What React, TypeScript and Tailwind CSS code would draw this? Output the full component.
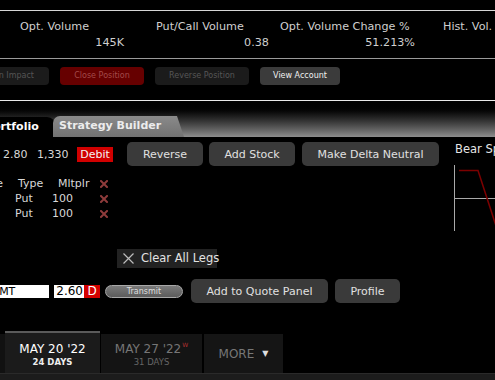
import React from 'react';

const stats = [
  { label: 'Opt. Volume', value: '145K', cls: 'ml-[20px] w-[104px]' },
  { label: 'Put/Call Volume', value: '0.38', cls: 'ml-[32px] w-[113px]' },
  { label: 'Opt. Volume Change %', value: '51.213%', cls: 'ml-[11px] w-[135px]' },
  { label: 'Hist. Vol.', value: '', cls: 'ml-[28px] w-[80px]' },
];

function RedX() {
  return (
    <svg width="8" height="8" viewBox="0 0 8 8" className="block">
      <path d="M1 1L7 7M7 1L1 7" stroke="#8e3b3b" strokeWidth="2" strokeLinecap="square" />
    </svg>
  );
}

export default function App() {
  return (
    <div className="w-[495px] h-[380px] bg-black overflow-hidden font-['DejaVu_Sans',sans-serif] text-[#d8d8d8] flex flex-col">
      {/* Top spacer + rule */}
      <div className="h-[10px] shrink-0" />
      <div className="h-px bg-[#d6d6d6] shrink-0" />

      {/* Stats strip */}
      <div className="h-[47px] shrink-0 flex pt-[8px] text-[11.2px] leading-[15px] text-[#cfcfcf]">
        {stats.map((s) => (
          <div key={s.label} className={`${s.cls} shrink-0 flex flex-col whitespace-nowrap`}>
            <span>{s.label}</span>
            <span className="text-right mt-px">{s.value}</span>
          </div>
        ))}
      </div>
      <div className="h-px bg-[#9a9a9a] shrink-0" />

      {/* Position actions */}
      <div className="h-[41px] shrink-0 flex items-start pt-[8px] text-[8px] whitespace-nowrap overflow-hidden">
        <div className="w-[70px] -ml-[21px] h-[18px] shrink-0 rounded-[4px] bg-[#1b1b1b] text-[#555] flex items-center justify-end pr-[15px]">
          Margin Impact
        </div>
        <div className="ml-[11px] w-[84px] h-[18px] shrink-0 rounded-[4px] bg-[#660000] text-[#a24a4a] flex items-center justify-center">
          Close Position
        </div>
        <div className="ml-[11px] w-[94px] h-[18px] shrink-0 rounded-[4px] bg-[#1b1b1b] text-[#565656] flex items-center justify-center">
          Reverse Position
        </div>
        <div className="ml-[11px] w-[80px] h-[18px] shrink-0 rounded-[4px] bg-[#3b3b3b] text-[#f0f0f0] flex items-center justify-center">
          View Account
        </div>
      </div>
      <div className="h-px bg-[#e8e8e8] shrink-0" />

      {/* Tab header */}
      <div className="h-[36px] shrink-0 bg-linear-to-b from-black from-10% to-[#8e8e8e] flex items-end text-[11px] font-bold whitespace-nowrap overflow-hidden">
        <div className="w-[56px] h-[20px] shrink-0 bg-black rounded-tr-[9px] flex items-center overflow-hidden">
          <span className="-ml-[15px] text-white">Portfolio</span>
        </div>
        <div className="-ml-[3px] w-[131px] h-[21px] shrink-0 rounded-tl-[7px] bg-linear-to-b from-[#8a8a8a] to-[#727272] [clip-path:polygon(0_0,124px_0,100%_100%,0_100%)] flex items-center pl-[6px] text-[#ececec]">
          Strategy Builder
        </div>
      </div>

      {/* Main panel */}
      <div className="flex-1 flex">
        <div className="w-[454px] shrink-0 flex flex-col text-[11px] leading-[15px]">
          {/* Action row */}
          <div className="mt-[5px] h-[24px] flex items-center whitespace-nowrap">
            <span className="ml-[3px] w-[34px]">2.80</span>
            <span className="w-[40px]">1,330</span>
            <span className="w-[36px] h-[15px] bg-[#d10000] text-[#f3f3f3] flex items-center justify-center">Debit</span>
            <button className="ml-[14px] w-[76px] h-[24px] rounded-[5px] bg-[#3a3a3a] text-[#e0e0e0]">Reverse</button>
            <button className="ml-[6px] w-[86px] h-[24px] rounded-[5px] bg-[#3a3a3a] text-[#e0e0e0]">Add Stock</button>
            <button className="ml-[7px] w-[137px] h-[24px] rounded-[5px] bg-[#3a3a3a] text-[#e0e0e0]">Make Delta Neutral</button>
          </div>

          {/* Legs table */}
          <div className="mt-[10px] flex flex-col whitespace-nowrap">
            <div className="h-[15px] flex items-center">
              <span className="w-[40px] -ml-[37px] text-right">Strike</span>
              <span className="ml-[15px] w-[40px]">Type</span>
              <span className="w-[42px]">Mltplr</span>
              <RedX />
            </div>
            {[0, 1].map((i) => (
              <div key={i} className="h-[15px] flex items-center">
                <span className="ml-[15px] w-[37px]">Put</span>
                <span className="w-[48px]">100</span>
                <RedX />
              </div>
            ))}
          </div>

          {/* Clear all legs */}
          <div className="mt-[28px] ml-[117px] w-[100px] h-[19px] bg-[#222] flex items-center whitespace-nowrap">
            <svg width="11" height="11" viewBox="0 0 11 11" className="ml-[6px] shrink-0">
              <path d="M0.5 0.5L10.5 10.5M10.5 0.5L0.5 10.5" stroke="#bdbdbd" strokeWidth="1.2" />
            </svg>
            <span className="ml-[7px] text-[11.5px] text-[#e2e2e2]">Clear All Legs</span>
          </div>

          {/* Order row */}
          <div className="mt-[11px] h-[24px] flex items-center whitespace-nowrap">
            <div className="w-[49px] h-[13px] bg-white text-black flex items-center overflow-hidden">
              <span className="-ml-[7px]">LMT</span>
            </div>
            <div className="ml-[5px] w-[30px] h-[13px] bg-white text-black text-[12px] flex items-center justify-end pr-px">2.60</div>
            <div className="w-[16px] h-[13px] bg-[#d40000] text-white text-[12px] flex items-center justify-center">D</div>
            <div className="ml-[5px] w-[78px] h-[13px] rounded-full border border-[#a8a8a8] bg-linear-to-b from-[#7a7a7a] to-[#5c5c5c] text-[8px] text-[#dedede] flex items-center justify-center">
              Transmit
            </div>
            <button className="ml-[8px] w-[137px] h-[24px] rounded-[5px] bg-[#3a3a3a] text-[#e0e0e0]">Add to Quote Panel</button>
            <button className="ml-[7px] w-[65px] h-[24px] rounded-[5px] bg-[#3a3a3a] text-[#e0e0e0]">Profile</button>
          </div>
        </div>

        {/* Risk graph */}
        <div className="flex-1 flex flex-col overflow-hidden">
          <span className="mt-[5px] text-[11.5px] leading-[15px] whitespace-nowrap pl-px text-[#e6e6e6]">Bear Spread</span>
          <svg width="41" height="66" viewBox="0 0 41 66" className="mt-[8px] block">
            <line x1="0.5" y1="0" x2="0.5" y2="66" stroke="#a9a9a9" />
            <line x1="0" y1="33.5" x2="41" y2="33.5" stroke="#a9a9a9" />
            <polyline points="5,5.5 24,5.5 45,70" fill="none" stroke="#7c0000" strokeWidth="1.5" />
          </svg>
        </div>
      </div>

      {/* Expiry tabs */}
      <div className="h-[42px] shrink-0 flex items-end whitespace-nowrap">
        <div className="w-[5px] h-[39px] bg-[#111]" />
        <div className="w-[95px] h-[42px] bg-[#1b1b1b] border-t-2 border-[#5a5a5a] flex flex-col items-center justify-center pt-[3px]">
          <span className="text-[12px] leading-[15px] text-white">MAY 20 '22</span>
          <span className="text-[8.5px] leading-[11px] font-bold text-[#eee]">24 DAYS</span>
        </div>
        <div className="ml-px w-[101px] h-[39px] bg-[#141414] flex flex-col items-center justify-center pt-[2px]">
          <span className="text-[12px] leading-[15px] text-[#767676]">
            MAY 27 '22<sup className="text-[6px] text-[#b03030] -top-[6px] ml-px">W</sup>
          </span>
          <span className="text-[8.5px] leading-[11px] text-[#666]">31 DAYS</span>
        </div>
        <div className="ml-[2px] w-[79px] h-[39px] bg-[#151515] flex items-center justify-center text-[12px] text-[#777]">
          MORE
          <span className="ml-[8px] text-[8px] text-[#ddd]">▼</span>
        </div>
      </div>
      <div className="h-[7px] shrink-0 bg-[#1c1c1c] border-t border-[#2a2a2a]" />
    </div>
  );
}
